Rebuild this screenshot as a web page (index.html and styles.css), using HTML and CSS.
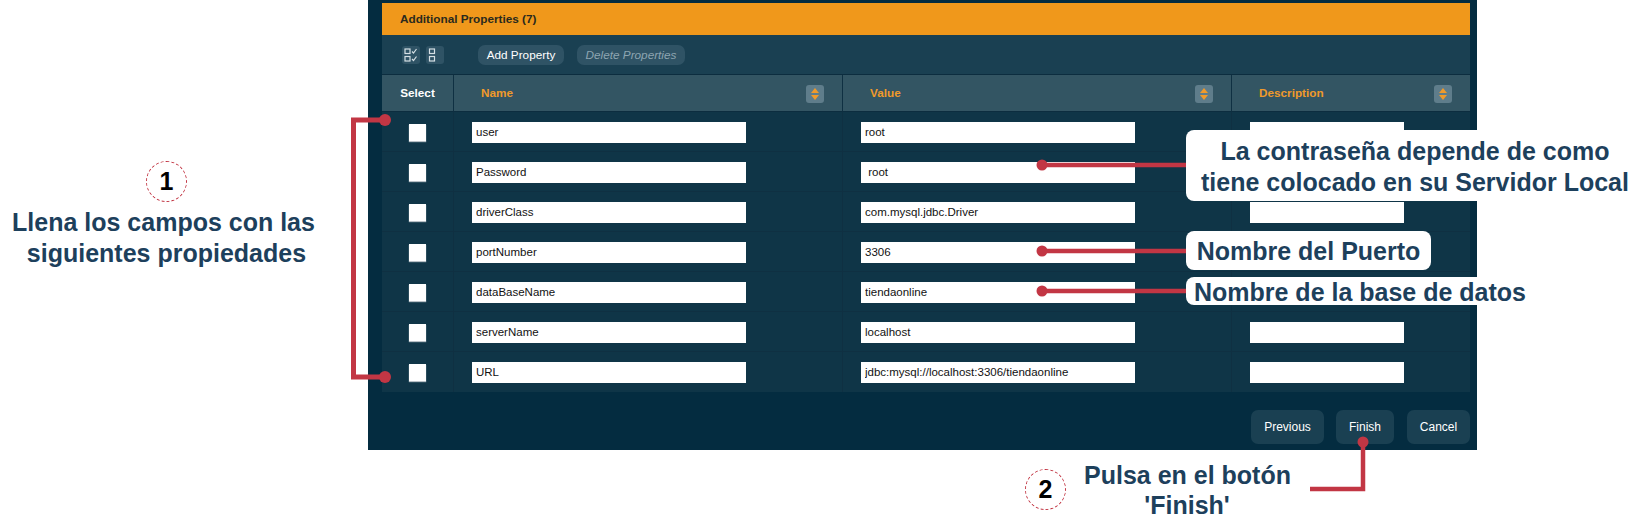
FILE: index.html
```html
<!DOCTYPE html>
<html lang="en">
<head>
    <meta charset="UTF-8">
    <meta name="viewport" content="width=device-width, initial-scale=1.0">
    <title>Additional Properties</title>
    <link rel="stylesheet" href="styles.css">
</head>
<body>
    <div class="page">
        <div class="note-left">
            <span class="step">1</span>
            <p class="note-text">Llena los campos con las<br><span class="indent">siguientes propiedades</span></p>
        </div>

        <div class="panel">
            <div class="title-bar">Additional Properties (7)</div>
            <div class="toolbar">
                <span class="icon-btn">
                    <svg width="18" height="18" viewBox="0 0 18 18" fill="none" stroke="#d5dfe4" stroke-width="1.2">
                        <rect x="3" y="3" width="5" height="4.500"/>
                        <rect x="3" y="10.500" width="5" height="4.500"/>
                        <path d="M10 5.500l1.500 1.500 3-4M10 13l1.500 1.500 3-4"/>
                    </svg>
                </span>
                <span class="icon-btn">
                    <svg width="18" height="18" viewBox="0 0 18 18" fill="none" stroke="#d5dfe4" stroke-width="1.2">
                        <rect x="3.500" y="3" width="5" height="4.500"/>
                        <rect x="3.500" y="10.500" width="5" height="4.500"/>
                    </svg>
                </span>
                <button class="tool-btn add-btn">Add Property</button>
                <button class="tool-btn del-btn">Delete Properties</button>
            </div>

            <table class="props">
                <thead>
                    <tr>
                        <th class="col-select">Select</th>
                        <th class="col-name"><div class="th-in">Name<span class="sort"><i class="up"></i><i class="down"></i></span></div></th>
                        <th class="col-value"><div class="th-in">Value<span class="sort"><i class="up"></i><i class="down"></i></span></div></th>
                        <th class="col-desc"><div class="th-in">Description<span class="sort"><i class="up"></i><i class="down"></i></span></div></th>
                    </tr>
                </thead>
                <tbody>
                    <tr>
                        <td><span class="check"></span></td>
                        <td><input class="field name" type="text" value="user"></td>
                        <td><input class="field value" type="text" value="root"></td>
                        <td><input class="field desc" type="text"></td>
                    </tr>
                    <tr>
                        <td><span class="check"></span></td>
                        <td><input class="field name" type="text" value="Password"></td>
                        <td><input class="field value" type="text" value=" root"></td>
                        <td><input class="field desc" type="text"></td>
                    </tr>
                    <tr>
                        <td><span class="check"></span></td>
                        <td><input class="field name" type="text" value="driverClass"></td>
                        <td><input class="field value" type="text" value="com.mysql.jdbc.Driver"></td>
                        <td><input class="field desc" type="text"></td>
                    </tr>
                    <tr>
                        <td><span class="check"></span></td>
                        <td><input class="field name" type="text" value="portNumber"></td>
                        <td><input class="field value" type="text" value="3306"></td>
                        <td><input class="field desc" type="text"></td>
                    </tr>
                    <tr>
                        <td><span class="check"></span></td>
                        <td><input class="field name" type="text" value="dataBaseName"></td>
                        <td><input class="field value" type="text" value="tiendaonline"></td>
                        <td><input class="field desc" type="text"></td>
                    </tr>
                    <tr>
                        <td><span class="check"></span></td>
                        <td><input class="field name" type="text" value="serverName"></td>
                        <td><input class="field value" type="text" value="localhost"></td>
                        <td><input class="field desc" type="text"></td>
                    </tr>
                    <tr>
                        <td><span class="check"></span></td>
                        <td><input class="field name" type="text" value="URL"></td>
                        <td><input class="field value" type="text" value="jdbc:mysql://localhost:3306/tiendaonline"></td>
                        <td><input class="field desc" type="text"></td>
                    </tr>
                </tbody>
            </table>

            <div class="footer">
                <button class="foot-btn prev">Previous</button>
                <button class="foot-btn finish">Finish</button>
                <button class="foot-btn cancel">Cancel</button>
            </div>
        </div>
    </div>

    <div class="note-bottom">
        <span class="step">2</span>
        <p class="note-text">Pulsa en el botón<br>'Finish'</p>
    </div>

    <!-- red connector lines over the screenshot -->
    <svg class="lines" width="1647" height="522" viewBox="0 0 1647 522" fill="none" stroke="#c23644">
        <path stroke-width="5" d="M385 120H353.500V377H385"/>
        <path stroke-width="4.500" d="M1042 165H1190M1042 251H1190M1042 291H1190"/>
        <path stroke-width="4.500" d="M1363 442V489H1310"/>
        <g fill="#c23644" stroke="none">
            <circle cx="385" cy="120" r="6"/>
            <circle cx="385" cy="377" r="6"/>
            <circle cx="1042" cy="165" r="5.500"/>
            <circle cx="1042" cy="251" r="5.500"/>
            <circle cx="1042" cy="291" r="5.500"/>
            <circle cx="1363" cy="442" r="5.500"/>
        </g>
    </svg>

    <div class="callout call-pass">La contraseña depende de como<br>tiene colocado en su Servidor Local</div>
    <div class="callout call-port">Nombre del Puerto</div>
    <div class="callout call-db">Nombre de la base de datos</div>
</body>
</html>
```

FILE: styles.css
```css
body {
    margin: 0;
    background-color: #fff;
    font-family: "Liberation Sans", Arial, sans-serif;
    width: 1647px;
    height: 522px;
    overflow: hidden;
    position: relative;
}

.page {
    display: flex;
}

/* left note */
.note-left {
    width: 327px;
    margin-right: 41px;
    padding-top: 161px;
    display: flex;
    flex-direction: column;
    align-items: center;
}

.step {
    width: 39px;
    height: 39px;
    border: 1px dashed #c23644;
    border-radius: 50%;
    display: flex;
    align-items: center;
    justify-content: center;
    font-size: 25px;
    font-weight: bold;
    color: #000;
}

.note-left .step {
    margin-left: 6px;
}

.note-text {
    margin: 5px 0 0;
    font-size: 25px;
    line-height: 31px;
    font-weight: bold;
    color: #1d405c;
    text-align: center;
}

.indent {
    margin-left: 6px;
}

/* dark panel */
.panel {
    width: 1088px;
    height: 447px;
    padding: 3px 7px 0 14px;
    background-color: #042c40;
}

.title-bar {
    height: 32px;
    line-height: 32px;
    padding-left: 18px;
    background-color: #f0981b;
    color: #2a2a1e;
    font-size: 11.750px;
    font-weight: bold;
}

.toolbar {
    height: 40px;
    display: flex;
    align-items: center;
    background-color: #1a4052;
    padding-left: 20px;
    box-sizing: border-box;
    border-bottom: 1px solid #0c2d3f;
}

.icon-btn {
    width: 18px;
    height: 18px;
    margin-right: 6px;
    background-color: #2f5365;
    border-radius: 3px;
    display: flex;
}

.tool-btn {
    height: 20px;
    border: none;
    border-radius: 7px;
    padding: 0;
    background-color: #2f5365;
    font-family: inherit;
    font-size: 11.750px;
}

.add-btn {
    width: 86px;
    margin-left: 28px;
    margin-right: 13px;
    color: #fff;
}

.del-btn {
    width: 108px;
    color: #8da5b1;
    font-style: italic;
}

/* table */
.props {
    width: 1088px;
    border-collapse: separate;
    border-spacing: 0;
    table-layout: fixed;
}

.props th {
    box-sizing: border-box;
    height: 37px;
    padding: 0;
    background-color: #335563;
    border-right: 1px solid #0f3042;
    border-bottom: 1px solid #0c2d3f;
    font-size: 11.750px;
    text-align: left;
    color: #ef9a2b;
}

.props th:last-child,
.props td:last-child {
    border-right: none;
}

.props .col-select {
    width: 72px;
    padding-bottom: 2px;
    text-align: center;
    color: #fff;
}

.props .col-name,
.props .col-value {
    width: 389px;
}

.th-in {
    display: flex;
    align-items: center;
    justify-content: space-between;
    padding: 0 18px 2px 27px;
}

.sort {
    width: 18px;
    height: 18px;
    margin-top: 4px;
    background-color: #5f7d8b;
    border-radius: 3px;
    display: flex;
    flex-direction: column;
    align-items: center;
    justify-content: center;
    gap: 2px;
}

.sort i {
    width: 0;
    height: 0;
    border-left: 4px solid transparent;
    border-right: 4px solid transparent;
}

.sort .up {
    border-bottom: 5px solid #ef9a2b;
}

.sort .down {
    border-top: 5px solid #ef9a2b;
}

.props td {
    box-sizing: border-box;
    height: 40px;
    padding: 2px 0 0;
    background-color: #0f3547;
    border-right: 1px solid #0f3042;
    border-bottom: 1px solid #0f3042;
    vertical-align: middle;
}

.props tr:last-child td {
    border-bottom: none;
    padding-bottom: 1px;
}

.check {
    display: block;
    width: 17px;
    height: 17px;
    margin: 0 auto;
    background-color: #fff;
    box-shadow: 0 1px 1px #b8c0c6;
}

.field {
    display: block;
    height: 21px;
    margin-left: 18px;
    padding: 0 4px 2px;
    box-sizing: border-box;
    border: none;
    background-color: #fff;
    font-family: inherit;
    font-size: 11.500px;
    color: #111;
}

.field.name,
.field.value {
    width: 274px;
}

.field.desc {
    width: 154px;
}

/* footer */
.footer {
    display: flex;
    justify-content: flex-end;
    padding-top: 18px;
}

.foot-btn {
    height: 34px;
    border: none;
    border-radius: 7px;
    background-color: #1a4052;
    color: #fff;
    font-family: inherit;
    font-size: 12px;
    padding: 0;
}

.prev {
    width: 73px;
    margin-right: 12px;
}

.finish {
    width: 58px;
    margin-right: 13px;
}

.cancel {
    width: 63px;
}

/* bottom note */
.note-bottom {
    display: flex;
    align-items: flex-start;
    margin: 10px 0 0 1025px;
}

.note-bottom .step {
    margin-top: 9px;
    flex-shrink: 0;
}

.note-bottom .note-text {
    margin: 0 0 0 18px;
    width: 206px;
    line-height: 30px;
    white-space: nowrap;
}

/* overlays */
.lines {
    position: absolute;
    left: 0;
    top: 0;
}

.callout {
    position: absolute;
    left: 1186px;
    background-color: #fff;
    color: #1d405c;
    font-weight: bold;
    font-size: 25px;
    border-radius: 8px;
    white-space: nowrap;
    text-align: center;
}

.call-pass {
    top: 130px;
    box-sizing: border-box;
    width: 458px;
    height: 71px;
    padding-top: 6px;
    line-height: 30.500px;
}

.call-port {
    top: 231px;
    width: 245px;
    height: 39px;
    line-height: 40px;
}

.call-db {
    top: 277px;
    width: 348px;
    height: 28px;
    line-height: 30px;
}
```
